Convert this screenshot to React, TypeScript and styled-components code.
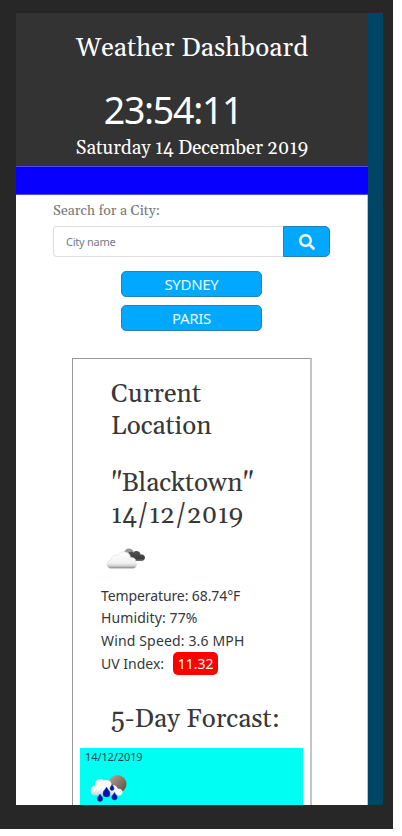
import React from 'react';
import styled, { createGlobalStyle } from 'styled-components';

const serif = 'Gelasio, Georgia, "Liberation Serif", serif';
const sans = '"Noto Sans", "Open Sans", sans-serif';

const GlobalStyle = createGlobalStyle`
  * { box-sizing: border-box; }
  html, body { margin: 0; background: #fff; }
  h1, h2, h3, p { margin: 0; font-weight: 400; }
  body { font-family: ${sans}; overflow: hidden; }
`;

const Frame = styled.div`
  width: 393px;
  height: 829px;
  padding: 13px 10px 24px 16px;
  background: #272727;
`;

const Screen = styled.div`
  display: flex;
  height: 792px;
  overflow: hidden;
  background: #004566;
`;

const Page = styled.main`
  display: flex;
  flex-direction: column;
  flex: none;
  width: 352px;
  background: #fff;
  border-right: 1px solid #b9c3d8;
`;

const Header = styled.header`
  flex: none;
  height: 153px;
  margin-right: -1px;
  padding-top: 20px;
  background: #333;
  color: #fff;
  text-align: center;
  white-space: nowrap;
`;

const Title = styled.h1`
  font: 400 26px/32px ${serif};
  letter-spacing: 0.1px;
`;

const Clock = styled.p`
  padding: 19px 38px 1px 0;
  font-size: 37.5px;
  line-height: 52px;
  letter-spacing: -1.3px;
`;

const Today = styled.h2`
  font: 400 19px/22px ${serif};
  letter-spacing: -0.1px;
`;

const Band = styled.div`
  flex: none;
  height: 29px;
  margin-right: -1px;
  background: #0800ff;
  border: solid #4b48ee;
  border-width: 1px 0;
`;

const Search = styled.form`
  display: flex;
  flex-direction: column;
  flex: none;
  width: 277px;
  margin: 6px 0 0 37px;
`;

const Label = styled.label`
  height: 25px;
  font: 400 14px/20px ${serif};
  letter-spacing: 0.05px;
  color: #777;
`;

const Field = styled.div`
  display: flex;
  height: 31px;
`;

const Input = styled.input`
  width: 230px;
  padding: 0 12px;
  border: 1px solid #dedede;
  border-right: 0;
  border-radius: 4px 0 0 4px;
  font: 400 11px/29px ${sans};
  letter-spacing: -0.25px;
  &::placeholder { color: #747a80; opacity: 1; }
`;

const SearchButton = styled.button`
  display: flex;
  align-items: center;
  justify-content: center;
  width: 47px;
  padding: 0;
  background: #00a8ff;
  border: 1px solid #2b80ae;
  border-radius: 0 5px 5px 0;
`;

const Cities = styled.div`
  display: flex;
  flex-direction: column;
  flex: none;
  align-items: center;
  gap: 8px;
  padding-top: 14px;
`;

const CityButton = styled.button`
  width: 141px;
  height: 26px;
  padding: 0 0 1px;
  background: #00a8ff;
  border: 1px solid #2682b4;
  border-radius: 5px;
  color: #e9f9ff;
  font: 400 15px/22px ${sans};
  letter-spacing: -0.3px;
`;

const Card = styled.section`
  flex: none;
  width: 240px;
  height: 520px;
  margin: 27px 0 0 56px;
  padding: 20px 7px 0;
  border: 1px solid #999;
  border-right: 2px solid #c5c5c5;
`;

const Heading = styled.h3<{ $above?: number; $below?: number }>`
  margin: ${(p) => p.$above ?? 0}px 0 ${(p) => p.$below ?? 0}px 31px;
  font: 400 26px/32px ${serif};
  color: #383838;
  white-space: pre-line;
`;

const Reading = styled.p<{ $track?: number }>`
  display: flex;
  align-items: center;
  height: 22.6px;
  padding-left: 21px;
  font-size: 14px;
  letter-spacing: ${(p) => p.$track ?? 0}px;
  color: #34383c;
  white-space: pre;
`;

const UvBadge = styled.span`
  display: flex;
  align-items: center;
  justify-content: center;
  width: 45px;
  height: 23px;
  margin-left: 9px;
  background: #f00;
  border-radius: 5px;
  color: #fff;
`;

const CloudIcon = styled.svg`
  display: block;
  width: 50px;
  height: 36px;
  margin: 8px 0 8px 20px;
`;

const ForecastDay = styled.article`
  height: 100px;
  padding: 1px 5px;
  background: #00fff2;
`;

const DayDate = styled.p`
  font-size: 11px;
  line-height: 16px;
  letter-spacing: -0.1px;
  color: #14484a;
`;

const RainIcon = styled.svg`
  display: block;
  width: 48px;
  height: 40px;
`;

export default function App() {
  return (
    <>
      <GlobalStyle />
      <Frame>
        <Screen>
          <Page>
            <Header>
              <Title>Weather Dashboard</Title>
              <Clock>23:54:11</Clock>
              <Today>Saturday 14 December 2019</Today>
            </Header>
            <Band />
            <Search>
              <Label htmlFor="city">Search for a City:</Label>
              <Field>
                <Input id="city" placeholder="City name" />
                <SearchButton type="button" aria-label="Search">
                  <svg width="16" height="16" viewBox="0 0 512 512" fill="#eefaff">
                    <path d="M505 442.7 405.3 343c-4.5-4.5-10.6-7-17-7H372c27.6-35.3 44-79.7 44-128C416 93.1 322.9 0 208 0S0 93.1 0 208s93.1 208 208 208c48.3 0 92.7-16.4 128-44v16.3c0 6.4 2.5 12.5 7 17l99.7 99.7c9.4 9.4 24.6 9.4 33.9 0l28.3-28.3c9.4-9.4 9.4-24.6.1-34zM208 336c-70.7 0-128-57.2-128-128 0-70.7 57.2-128 128-128 70.7 0 128 57.2 128 128 0 70.7-57.2 128-128 128z" />
                  </svg>
                </SearchButton>
              </Field>
            </Search>
            <Cities>
              <CityButton>SYDNEY</CityButton>
              <CityButton>PARIS</CityButton>
            </Cities>
            <Card>
              <Heading $below={25}>{'Current\nLocation'}</Heading>
              <Heading>{'"Blacktown"\n14/12/2019'}</Heading>
              <CloudIcon viewBox="0 0 50 36">
                <defs>
                  <linearGradient id="cloud" x1="0" y1="0" x2="0" y2="1">
                    <stop offset="0" stopColor="#fff" />
                    <stop offset="0.68" stopColor="#f1f1f1" />
                    <stop offset="0.86" stopColor="#ccc" />
                    <stop offset="1" stopColor="#777" />
                  </linearGradient>
                  <linearGradient id="dark" x1="0" y1="0" x2="0" y2="1">
                    <stop offset="0" stopColor="#555" />
                    <stop offset="0.75" stopColor="#3c3c3c" />
                    <stop offset="1" stopColor="#777" />
                  </linearGradient>
                </defs>
                <circle cx="29" cy="13.5" r="5" fill="#999" />
                <path d="M28 15.5c-1-3 3-5 5.5-3 2-2.5 7-1.5 7 2 3-.5 5 1.5 4.3 4-.5 2-2 2.5-4 2.5H33c-3 0-5-2-5-5.5z" fill="url(#dark)" />
                <path d="M11.5 28.5c-6 0-6-7.5-.5-8.5-.5-4 4-6 7-4.5 3-6 12.5-4 12.5 2 3.5-.5 6 2 5 4.5 2.5 3 .5 6.5-3 6.5z" fill="url(#cloud)" stroke="#ddd" strokeWidth=".6" />
              </CloudIcon>
              <Reading $track={-0.1}>Temperature: 68.74°F</Reading>
              <Reading $track={0.1}>Humidity: 77%</Reading>
              <Reading $track={0.15}>Wind Speed: 3.6 MPH</Reading>
              <Reading>
                UV Index:<UvBadge>11.32</UvBadge>
              </Reading>
              <Heading $above={30} $below={12}>5-Day Forcast:</Heading>
              <ForecastDay>
                <DayDate>14/12/2019</DayDate>
                <RainIcon viewBox="0 0 48 40">
                  <defs>
                    <linearGradient id="moon" x1="0" y1="0" x2="1" y2="1">
                      <stop offset="0" stopColor="#b5aaa0" />
                      <stop offset="1" stopColor="#5c4532" />
                    </linearGradient>
                    <linearGradient id="rainCloud" x1="0" y1="0" x2="0" y2="1">
                      <stop offset="0.55" stopColor="#fff" />
                      <stop offset="1" stopColor="#c3d5dc" />
                    </linearGradient>
                  </defs>
                  <circle cx="32.5" cy="19" r="9" fill="url(#moon)" />
                  <path d="M23 28c-4-7 7-12 10-4 4-1.5 6.5 4 2.5 6.5H27z" fill="#f3f8fa" />
                  <path d="M11 30.5c-7 0-7-8.5-1-10-.5-6 6-8 9-5 5-2 8.500 2 7.500 6 4 1 4 8 0 9z" fill="url(#rainCloud)" />
                  <g fill="#0610b4" stroke="#055071" strokeWidth=".5">
                    <path d="M21.5 22c1.5 3 3.5 4 3.5 6.5a3.5 3.5 0 0 1-7 0c0-2.5 2-3.5 3.5-6.500z" />
                    <path d="M27 19.5c1 2 2 2.5 2 4a2 2 0 0 1-4 0c0-1.5 1-2 2-4z" />
                    <path d="M15 29c1.2 2.3 2.7 3 2.7 4.8a2.7 2.7 0 0 1-5.4 0c0-1.8 1.5-2.5 2.7-4.8z" />
                    <path d="M29.5 27.5c1.2 2.3 2.7 3 2.7 4.8a2.7 2.7 0 0 1-5.4 0c0-1.8 1.5-2.5 2.7-4.8z" />
                  </g>
                </RainIcon>
              </ForecastDay>
            </Card>
          </Page>
        </Screen>
      </Frame>
    </>
  );
}
